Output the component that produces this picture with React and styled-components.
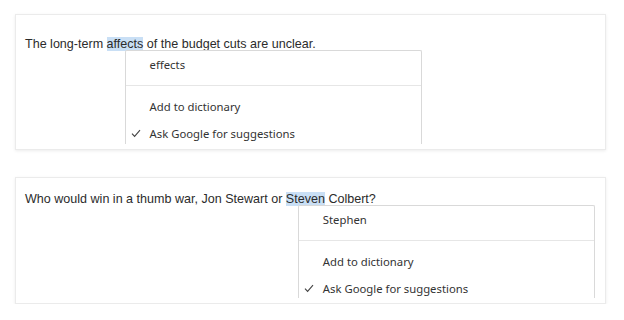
import React from "react";
import styled, { createGlobalStyle } from "styled-components";

const Global = createGlobalStyle`
  html, body { margin: 0; padding: 0; background: #fff; }
  body { font-family: "Liberation Sans", Arial, sans-serif; }
`;

const Page = styled.div`
  display: flex;
  flex-direction: column;
  gap: 27px;
  padding: 14px 18px 0 15px;
`;

const Card = styled.div`
  background: #fff;
  border: 1px solid #ebebeb;
  box-shadow: 0 1px 3px rgba(0, 0, 0, 0.08);
  padding: 5px;
`;

const Clip = styled.div`
  position: relative;
  overflow: hidden;
  height: ${(p) => p.$h}px;
  padding: ${(p) => p.$top}px 0 0 4px;
  box-sizing: border-box;
`;

const Sentence = styled.p`
  margin: 0;
  font-size: 12.55px;
  line-height: 15px;
  color: #2b2b2b;
  white-space: nowrap;
`;

const Word = styled.span`
  position: relative;
  background: #c9dff5;
`;

const Menu = styled.div`
  position: absolute;
  top: calc(100% - 1px);
  left: ${(p) => p.$left}px;
  width: 297px;
  height: 110px;
  box-sizing: border-box;
  border: 1px solid #d9d9d9;
  border-bottom: none;
  border-radius: 2px 2px 0 0;
  background: #fff;
  font-family: "Noto Sans", "Open Sans", sans-serif;
  font-size: 11.3px;
  color: #333;
  z-index: 2;
`;

const Item = styled.div`
  position: relative;
  height: 27px;
  display: flex;
  align-items: center;
  padding-left: 24px;
  white-space: nowrap;
`;

const Divider = styled.div`
  height: 1px;
  background: #e6e6e6;
  margin: 7px 0;
`;

const Check = styled.svg`
  position: absolute;
  left: 5px;
  top: 9px;
`;

function SpellMenu({ left, suggestion }) {
  return (
    <Menu $left={left}>
      <Item>{suggestion}</Item>
      <Divider />
      <Item>Add to dictionary</Item>
      <Item>
        <Check width="10" height="9" viewBox="0 0 10 9">
          <polyline
            points="1,4.6 3.6,7.4 9,1.2"
            fill="none"
            stroke="#444"
            strokeWidth="1.1"
          />
        </Check>
        Ask Google for suggestions
      </Item>
    </Menu>
  );
}

export default function App() {
  return (
    <>
      <Global />
      <Page>
        <Card>
          <Clip $h={124} $top={17}>
            <Sentence>
              The long-term{" "}
              <Word>
                affects
                <SpellMenu left={18} suggestion="effects" />
              </Word>{" "}
              of the budget cuts are unclear.
            </Sentence>
          </Clip>
        </Card>
        <Card>
          <Clip $h={115} $top={9}>
            <Sentence>
              Who would win in a thumb war, Jon Stewart or{" "}
              <Word>
                Steven
                <SpellMenu left={12} suggestion="Stephen" />
              </Word>{" "}
              Colbert?
            </Sentence>
          </Clip>
        </Card>
      </Page>
    </>
  );
}
